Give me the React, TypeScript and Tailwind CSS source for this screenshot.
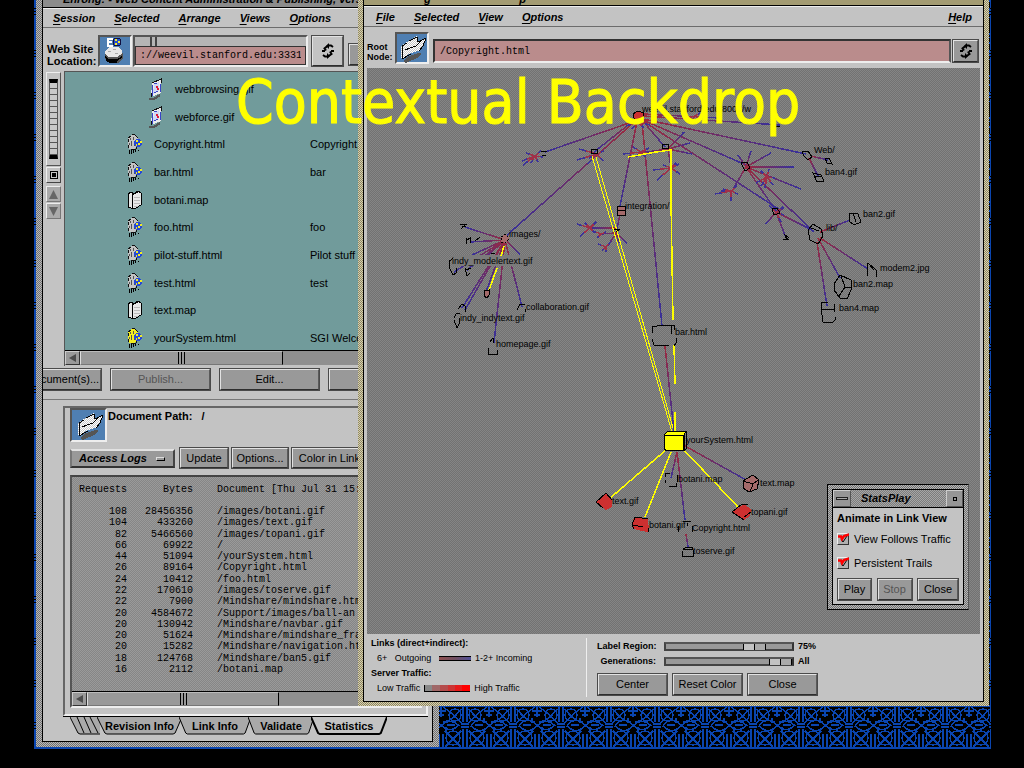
import React from "react";

const SANS = "font-['Liberation_Sans',Arial,sans-serif]";
const MONO = "font-['Liberation_Mono',monospace]";
const CHECK = "bg-[length:2px_2px]";
const GRAY_DITHER = `${CHECK} bg-[repeating-conic-gradient(#b9b9b9_0_25%,#717171_0_50%)]`;
const KHAKI_DITHER = `${CHECK} bg-[repeating-conic-gradient(#d6d0b4_0_25%,#8f875f_0_50%)]`;
const BTN =
  "flex shrink-0 items-center justify-center border-2 border-t-[#e2e2e2] border-l-[#e2e2e2] border-r-[#5a5a5a] border-b-[#2e2e2e] bg-[#999999] text-[11px] leading-none text-black whitespace-nowrap outline-1 -outline-offset-1 outline-[#4a4a4a]";

function MenuButton({ label }: { label: string }) {
  return (
    <button className="text-[11px] leading-[12px] font-bold italic">
      <span className="underline underline-offset-2">{label[0]}</span>
      {label.slice(1)}
    </button>
  );
}

function RecycleIcon() {
  return (
    <svg width="14" height="16" viewBox="0 0 14 16" fill="none" stroke="#000" strokeWidth="2" aria-hidden="true">
      <path d="M12 4 10 2.5H7L3.5 5.5 5 7.5" />
      <path d="M8 0v6l-3-3zM6 16v-6l3 3z" fill="#000" strokeWidth="0" />
      <path d="M2 12 4 13.5H7L10.500 11 9 8.500M10 8h3M1 8h3" />
    </svg>
  );
}

function PageIcon() {
  return (
    <svg width="30" height="29" viewBox="0 0 30 29" shapeRendering="crispEdges" aria-hidden="true">
      <defs>
        <pattern id="paper" width="2" height="2" patternUnits="userSpaceOnUse">
          <rect width="2" height="2" fill="#fff" />
          <rect width="1" height="1" fill="#c8c8c8" />
          <rect x="1" y="1" width="1" height="1" fill="#c8c8c8" />
        </pattern>
      </defs>
      <path d="M6 27 12 22 22 19 25 20 20 24 9 29z" fill="#555" />
      <path d="M4 12 10 8 13 6 20 2 21 8 29 4 27 11 23 16 12 20 5 25 4 24z" fill="url(#paper)" />
      <path d="M5 25V12M5 12 10 9M12 7 20 3M20 3 21 8M21 8 29 4M29 4 26 12 22 17M14 20 5 25M8 16 13 14 19 12 24 7" fill="none" stroke="#000" />
    </svg>
  );
}

function SiteIcon() {
  return (
    <svg width="30" height="28" viewBox="0 0 30 28" shapeRendering="crispEdges" aria-hidden="true">
      <path d="M7 2h6M8 2v7h5M8 5h4" stroke="#fff" strokeWidth="1.500" fill="none" />
      <circle cx="17" cy="5" r="4" fill="#214dd0" stroke="#101040" />
      <path d="M15 3h2M18 5h2M15 7h2" stroke="#f3ec28" strokeWidth="1.500" />
      <path d="M5 17v5l4 4h9l5-4v-6z" fill="#555" />
      <path d="M5 14 9 10h10l3 4v3l-5 3H9l-4-3z" fill="#e6e6e6" />
      <path d="M5 20l4 3h8l5-3M6 23l4 2h7" stroke="#000" strokeWidth="1.500" fill="none" />
      <path d="M8 14h3M13 12h3M15 16h3" stroke="#aaa" />
    </svg>
  );
}

type Kind = "gif" | "html" | "map" | "active";

function FileIcon({ kind }: { kind: Kind }) {
  if (kind === "gif")
    return (
      <svg width="16" height="22" viewBox="0 0 16 22" shapeRendering="crispEdges" aria-hidden="true">
        <path d="M1 21h5l6-4" stroke="#555" strokeWidth="2" fill="none" />
        <path d="M4 5 13 1v14L3 19z" fill="#ececec" />
        <path d="M4 5 13 1v4M3 19v-4" fill="none" stroke="#111" />
        <path d="M6 6 11 4v9l-6 3z" fill="#cfd8f5" />
        <path d="M4 7v11M12 6v8M6 6l3-1M6 15l4-2" stroke="#3a44c8" fill="none" />
        <path d="M8 9h2M9 11h2" stroke="#e01838" strokeWidth="2" />
      </svg>
    );
  if (kind === "map")
    return (
      <svg width="16" height="22" viewBox="0 0 16 22" shapeRendering="crispEdges" aria-hidden="true">
        <path d="M1 5 4 3l3 2 4-3 3 2v12l-7 4-6-2z" fill="#e8e8e8" stroke="#000" />
        <path d="M5 6v13M5 6l6-3" stroke="#000" />
        <path d="M7 8h6M7 11h6M7 14h6M7 17h4" stroke="#bbb" />
      </svg>
    );
  const body = kind === "active" ? "#f4ee20" : "#c4c4c4";
  return (
    <svg width="16" height="22" viewBox="0 0 16 22" shapeRendering="crispEdges" aria-hidden="true">
      <path d="M1 5 5 2h4l2 3v9l-4 2H2L1 12z" fill={body} />
      <path d="M1 5 4 3M5 1h3M8 2l3 3M1 6v3M1 12v3M4 16h5M9 14v2" stroke="#111" fill="none" />
      <path d="M3 5v2M4 8v5M6 4v3M7 9v4M9 6v2M2 10v2" stroke="#555" />
      <circle cx="11" cy="10" r="4" fill="#2548d8" />
      <path d="M9 8h2M11 11h2M9 12h1M13 9h2" stroke="#f4ee20" strokeWidth="1.500" />
      <path d="M2 17v4M4 17v4M6 17v3M8 17v2M11 17v1" stroke="#000" />
    </svg>
  );
}

const files: { name: string; title?: string; kind: Kind; deep?: boolean }[] = [
  { name: "webbrowsing.gif", kind: "gif", deep: true },
  { name: "webforce.gif", kind: "gif", deep: true },
  { name: "Copyright.html", title: "Copyright,", kind: "html" },
  { name: "bar.html", title: "bar", kind: "html" },
  { name: "botani.map", kind: "map" },
  { name: "foo.html", title: "foo", kind: "html" },
  { name: "pilot-stuff.html", title: "Pilot stuff f", kind: "html" },
  { name: "test.html", title: "test", kind: "html" },
  { name: "text.map", kind: "map" },
  { name: "yourSystem.html", title: "SGI Welco", kind: "active" },
];

const logs: [string, string, string][] = [
  ["108", "28456356", "/images/botani.gif"],
  ["104", "433260", "/images/text.gif"],
  ["82", "5466560", "/images/topani.gif"],
  ["66", "69922", "/"],
  ["44", "51094", "/yourSystem.html"],
  ["26", "89164", "/Copyright.html"],
  ["24", "10412", "/foo.html"],
  ["22", "170610", "/images/toserve.gif"],
  ["22", "7900", "/Mindshare/mindshare.htm"],
  ["20", "4584672", "/Support/images/ball-an"],
  ["20", "130942", "/Mindshare/navbar.gif"],
  ["20", "51624", "/Mindshare/mindshare_fra"],
  ["20", "15282", "/Mindshare/navigation.ht"],
  ["18", "124768", "/Mindshare/ban5.gif"],
  ["16", "2112", "/botani.map"],
];

function HScroll({ thumb }: { thumb: string }) {
  return (
    <div className="flex h-[15px] border-t border-black bg-[#8f8f8f]">
      <button aria-label="Scroll left" className="flex w-[15px] items-center justify-center border border-t-[#ccc] border-l-[#ccc] border-r-[#333] border-b-[#333] bg-[#999]">
        <svg width="8" height="8" viewBox="0 0 8 8" aria-hidden="true">
          <path d="M0 4 7 0v8z" fill="#4c4c4c" />
        </svg>
      </button>
      <div className={`flex items-stretch justify-center gap-[2px] border border-t-[#bbb] border-l-[#ddd] border-r-black border-b-[#777] bg-[#999] ${thumb}`}>
        <span className="w-px bg-black" />
        <span className="w-px bg-black" />
        <span className="w-px bg-black" />
      </div>
    </div>
  );
}

function Tab({ label, active, width }: { label: string; active?: boolean; width: string }) {
  return (
    <button role="tab" aria-selected={!!active} className={`relative -ml-[3px] flex h-[18px] items-center justify-center text-[11px] leading-none font-bold ${width}`}>
      <svg className="absolute inset-0 h-full w-full" viewBox="0 0 86 18" preserveAspectRatio="none" aria-hidden="true">
        <path d="M0 0 8 16 10 17H77L79 16 86 0z" fill={active ? "#c3c3c3" : "#a9a9a9"} />
        <path d="M0 0 8 16 10 17H77L79 16 86 0" fill="none" stroke="#000" vectorEffect="non-scaling-stroke" strokeWidth={active ? 2 : 1} />
      </svg>
      <span className="relative">{label}</span>
    </button>
  );
}

function SiteWindow() {
  return (
    <section aria-label="Web site" className={`absolute top-0 left-[36px] w-[403px] px-[6px] pb-[5px] ${GRAY_DITHER}`}>
      <div className="overflow-hidden border-x border-b border-black bg-[#c3c3c3]">
        <div className="flex h-[8px] items-end overflow-hidden border-b border-black bg-[#8c8c8c] pb-[2px] pl-[20px]">
          <h2 className="text-[11px] leading-[11px] font-bold whitespace-nowrap italic">Enrong: - Web Content Administration &amp; Publishing, versi</h2>
        </div>
        <nav className="flex h-[20px] items-center gap-[19px] border-t border-b border-t-[#eee] border-b-[#6c6c6c] pl-[10px]">
          {["Session", "Selected", "Arrange", "Views", "Options"].map((m) => (
            <MenuButton key={m} label={m} />
          ))}
        </nav>
        <div className="flex h-[43px] items-start pt-[7px] pl-[4px]">
          <label htmlFor="location" className="w-[51px] pt-[8px] text-[11px] leading-[12px] font-bold whitespace-nowrap">
            Web Site
            <br />
            Location:
          </label>
          <div className="flex h-[32px] w-[34px] items-center justify-center border-2 border-t-[#555] border-l-[#555] border-r-[#eee] border-b-[#eee] bg-[#4f7fb2]">
            <SiteIcon />
          </div>
          <div className="ml-px flex h-[32px] w-[175px] flex-col border-2 border-t-[#555] border-l-[#555] border-r-[#eee] border-b-[#eee]">
            <div className="flex h-[9px] gap-[3px] bg-[#b5b5b5] pl-[15px]">
              <span className="w-[2px] bg-[#444]" />
              <span className="w-[2px] bg-[#444]" />
            </div>
            <input
              id="location"
              defaultValue="://weevil.stanford.edu:3331"
              className={`h-[19px] w-full border border-[#333] bg-[#ba8c8c] px-[4px] text-[10px] leading-none outline-none ${MONO}`}
            />
          </div>
          <button aria-label="Reload" className={`${BTN} ml-[3px] h-[32px] w-[33px] bg-[#c3c3c3]!`}>
            <RecycleIcon />
          </button>
          <button className={`${BTN} mt-[8px] ml-[4px] h-[23px] w-[60px]`}>Load</button>
        </div>
        <div className="flex h-[295px]">
          <div className="flex w-[21px] shrink-0 flex-col items-center gap-px pt-px">
            <div className="h-[94px] w-[15px] border border-t-[#eee] border-l-[#eee] border-r-[#555] border-b-[#555] px-[2px] py-[6px]">
              <div className="h-full border-x border-y-4 border-x-[#555] border-y-black bg-[repeating-linear-gradient(#c9c9c9_0_5px,#555_5px_6px)]" />
            </div>
            <button aria-label="Home" className="flex h-[16px] w-[15px] items-center justify-center border border-t-[#eee] border-l-[#eee] border-r-[#444] border-b-[#444]">
              <span className="flex size-[8px] items-center justify-center border border-black">
                <span className="size-[4px] bg-black" />
              </span>
            </button>
            <button aria-label="Scroll up" className="mt-[2px] flex h-[16px] w-[15px] items-center justify-center border border-t-[#eee] border-l-[#eee] border-r-[#777] border-b-[#777] bg-[#aaa]">
              <svg width="9" height="9" viewBox="0 0 9 9" aria-hidden="true"><path d="M4.500 0 9 9H0z" fill="#666" /></svg>
            </button>
            <button aria-label="Scroll down" className="flex h-[16px] w-[15px] items-center justify-center border border-t-[#eee] border-l-[#eee] border-r-[#777] border-b-[#777] bg-[#aaa]">
              <svg width="9" height="9" viewBox="0 0 9 9" aria-hidden="true"><path d="M4.500 9 9 0H0z" fill="#666" /></svg>
            </button>
          </div>
          <div className="min-w-0 flex-1 border-t border-l border-[#555]">
            <div className="h-[278px] overflow-hidden bg-[#719b9b] pt-[3px]">
              <ul className="grid h-[277px] auto-rows-fr text-[11px] leading-[12px]">
                {files.map((f) => (
                  <li key={f.name} className="grid grid-cols-[245px_1fr] items-center">
                    <span className={`flex items-center gap-[11px] ${f.deep ? "pl-[83px]" : "pl-[62px]"}`}>
                      <FileIcon kind={f.kind} />
                      {f.name}
                    </span>
                    <span className="whitespace-nowrap">{f.title}</span>
                  </li>
                ))}
              </ul>
            </div>
            <HScroll thumb="w-[203px]" />
          </div>
        </div>
        <div className="-ml-[43px] flex h-[28px] gap-[8px] pt-[2px]">
          <button className={`${BTN} h-[23px] w-[102px] pl-[24px]`}>Document(s)...</button>
          <button className={`${BTN} h-[23px] w-[101px] text-[#555]!`} disabled>Publish...</button>
          <button className={`${BTN} h-[23px] w-[101px]`}>Edit...</button>
          <button className={`${BTN} h-[23px] w-[101px]`}>View...</button>
        </div>
        <div className="mt-[5px] border-t border-[#777] pt-[6px] pl-[20px]">
          <div className="mr-[4px] border-2 border-t-[#666] border-l-[#666] border-r-[#eee] border-b-[#eee] pr-[4px] pb-[6px] pl-[5px]">
            <div className="flex h-[39px]">
              <div className="flex h-[34px] w-[37px] items-center justify-center border-2 border-t-[#555] border-l-[#555] border-r-[#eee] border-b-[#eee] bg-[#4f7fb2]">
                <PageIcon />
              </div>
              <p className="pt-[2px] pl-px text-[11px] leading-[12px] font-bold">Document Path: &nbsp; /</p>
            </div>
            <div className="flex h-[28px] gap-[2px]">
              <div className="relative mt-[2px] mr-[2px] h-[19px] w-[105px]">
                <select
                  aria-label="Report"
                  className="block h-full w-full appearance-none border-2 border-t-[#e2e2e2] border-l-[#777] border-r-[#444] border-b-[#333] bg-[#999] pl-[7px] text-[11px] leading-none font-bold italic"
                >
                  <option>Access Logs</option>
                </select>
                <span className="pointer-events-none absolute top-[8px] right-[10px] h-[4px] w-[9px] border border-t-[#ddd] border-b-black border-l-[#ddd] border-r-black" />
              </div>
              <button className={`${BTN} h-[22px] w-[50px]`}>Update</button>
              <button className={`${BTN} h-[22px] w-[58px]`}>Options...</button>
              <button className={`${BTN} h-[22px] w-[86px]`}>Color in Link...</button>
            </div>
            <div className="border-2 border-t-[#444] border-l-[#555] border-r-[#eee] border-b-[#eee]">
              <div className="h-[214px] overflow-hidden bg-[repeating-conic-gradient(#9a9a9a_0_25%,#868686_0_50%)] bg-[length:2px_2px] pt-[7px]">
                <table className={`h-[191px] w-full table-fixed border-collapse text-[10px] leading-[11px] ${MONO}`}>
                  <thead>
                    <tr className="h-[22px] align-top">
                      <th className="w-[55px] p-0 text-right font-normal">Requests</th>
                      <th className="w-[66px] p-0 text-right font-normal">Bytes</th>
                      <th className="p-0 pl-[24px] text-left font-normal whitespace-nowrap">Document [Thu Jul 31 15:</th>
                    </tr>
                  </thead>
                  <tbody>
                    {logs.map(([r, b, d]) => (
                      <tr key={d}>
                        <td className="p-0 text-right">{r}</td>
                        <td className="p-0 text-right">{b}</td>
                        <td className="p-0 pl-[24px] whitespace-nowrap">{d}</td>
                      </tr>
                    ))}
                  </tbody>
                </table>
              </div>
              <HScroll thumb="w-[192px]" />
            </div>
          </div>
          <div role="tablist" className="mr-[4px] flex border-t border-black pb-[6px] pl-[7px]">
            <svg width="30" height="18" viewBox="0 0 30 18" fill="none" stroke="#000" aria-hidden="true">
              <path d="M1 0h26l8 16v1H11L8 16z" fill="#a9a9a9" stroke="none" />
              <path d="M0 0 8 16 10 17H30M7 0 14 16M14 0 21 16M20 0 28 16" />
            </svg>
            <Tab label="Revision Info" width="w-[85px]" />
            <Tab label="Link Info" width="w-[72px]" />
            <Tab label="Validate" width="w-[66px]" />
            <Tab label="Statistics" active width="w-[76px]" />
          </div>
        </div>
      </div>
    </section>
  );
}

type Pt4 = [number, number, number, number];

const links: Pt4[] = [
  [632, 122, 545, 152],
  [632, 122, 594, 152],
  [632, 124, 506, 236],
  [637, 122, 620, 206],
  [642, 122, 662, 326],
  [642, 120, 665, 147],
  [643, 120, 746, 165],
  [643, 119, 806, 154],
  [643, 121, 780, 210],
  [643, 116, 780, 125],
  [643, 114, 720, 118],
  [668, 149, 684, 132],
  [668, 149, 690, 143],
  [668, 149, 692, 154],
  [668, 149, 640, 153],
  [668, 149, 671, 168],
  [746, 167, 738, 155],
  [746, 167, 751, 151],
  [746, 167, 771, 153],
  [746, 167, 794, 167],
  [746, 167, 801, 189],
  [746, 167, 732, 191],
  [746, 167, 776, 211],
  [746, 167, 814, 232],
  [776, 212, 786, 238],
  [776, 212, 784, 208],
  [776, 212, 766, 224],
  [776, 212, 810, 229],
  [811, 156, 828, 160],
  [809, 158, 818, 176],
  [820, 232, 850, 220],
  [820, 238, 868, 269],
  [818, 238, 840, 278],
  [817, 242, 827, 306],
  [505, 240, 465, 227],
  [505, 240, 470, 242],
  [505, 240, 472, 255],
  [505, 240, 480, 262],
  [505, 240, 454, 272],
  [505, 240, 467, 270],
  [505, 240, 462, 308],
  [505, 240, 465, 310],
  [505, 240, 486, 292],
  [505, 240, 494, 343],
  [505, 240, 522, 307],
  [505, 240, 520, 254],
  [620, 214, 617, 229],
  [616, 228, 590, 228],
  [616, 233, 600, 234],
  [616, 233, 608, 246],
  [616, 233, 627, 243],
  [616, 233, 619, 243],
  [665, 346, 674, 432],
  [677, 452, 671, 478],
  [677, 452, 685, 520],
  [686, 534, 688, 547],
  [685, 446, 748, 481],
];

const bursts: { x: number; y: number; rays: [number, number][] }[] = [
  { x: 535, y: 156, rays: [[-12, 9], [-9, -3], [-4, 7], [6, -5], [3, 6], [-13, 5], [8, 1]] },
  { x: 597, y: 154, rays: [[-18, -5], [-20, 6], [-9, 10], [6, 7], [-8, 4], [7, -3]] },
  { x: 641, y: 152, rays: [[-18, 2], [-8, -5], [8, -4], [-5, 5], [10, 2], [5, 5]] },
  { x: 671, y: 168, rays: [[-18, 2], [-14, 12], [8, -4], [9, 6], [-8, -3], [5, -5]] },
  { x: 731, y: 191, rays: [[-16, 3], [-8, -2], [0, 10], [7, 3], [6, -5], [-10, 0]] },
  { x: 767, y: 177, rays: [[-11, 6], [-6, -6], [-2, 11], [6, 8], [8, 1], [2, -8], [-6, 9]] },
  { x: 590, y: 228, rays: [[-13, -4], [-10, 8], [6, -6], [5, 5], [-5, -5]] },
  { x: 601, y: 234, rays: [[-8, -3], [-4, 4], [5, -2]] },
  { x: 606, y: 247, rays: [[-8, -3], [0, 5], [4, -5], [-4, 3]] },
  { x: 776, y: 212, rays: [[7, -5], [5, 10], [-7, -6], [8, 3]] },
  { x: 695, y: 116, rays: [[-9, 2], [8, 2], [-4, 7], [10, 6], [5, -3]] },
  { x: 638, y: 122, rays: [[-12, 4], [-6, 7], [6, 6], [12, 3]] },
];

const labels: [string, number, number][] = [
  ["weevil.stanford.edu:8001/w", 642, 112],
  ["Web/", 814, 153],
  ["ban4.gif", 825, 175],
  ["ban2.gif", 863, 217],
  ["lib/", 826, 231],
  ["modem2.jpg", 880, 271],
  ["ban2.map", 853, 287],
  ["ban4.map", 839, 311],
  ["integration/", 625, 209],
  ["images/", 509, 237],
  ["collaboration.gif", 526, 310],
  ["indy_indytext.gif", 460, 321],
  ["homepage.gif", 496, 347],
  ["bar.html", 675, 335],
  ["yourSystem.html", 686, 443],
  ["botani.map", 678, 482],
  ["text.map", 760, 486],
  ["text.gif", 612, 504],
  ["botani.gif", 649, 528],
  ["topani.gif", 751, 515],
  ["Copyright.html", 692, 531],
  ["toserve.gif", 693, 554],
];

function LinkGraph() {
  return (
    <svg width="613" height="566" viewBox="367 68 613 566" role="img" aria-label="Link view" className="block">
      <defs>
        {links.map(([a, b, c, d], i) => (
          <linearGradient key={i} id={`lk${i}`} gradientUnits="userSpaceOnUse" x1={a} y1={b} x2={c} y2={d}>
            <stop offset="0" stopColor="#9c2a3e" />
            <stop offset="1" stopColor="#35309c" />
          </linearGradient>
        ))}
      </defs>
      <g shapeRendering="crispEdges" strokeWidth="1.500" fill="none">
        {links.map(([a, b, c, d], i) => (
          <path key={i} d={`M${a} ${b}L${c} ${d}`} stroke={`url(#lk${i})`} />
        ))}
        {bursts.map(({ x, y, rays }) =>
          rays.map(([dx, dy], k) => (
            <g key={`${x}-${y}-${k}`}>
              <path d={`M${x} ${y}l${dx} ${dy}`} stroke="#3b329a" />
              <path d={`M${x} ${y}l${dx * 0.6} ${dy * 0.6}`} stroke="#a03048" />
            </g>
          )),
        )}
        <rect x="452" y="255" width="86" height="11" fill="#7b7b7b" />
        <g stroke="#ffff00" strokeWidth="1.500">
          <path d="M592 156 672 432M596 157 673 428" strokeWidth="1" />
          <path d="M628 157 656 152 671 150V200L673 320M674 345 675 384M675 412V434" />
          <path d="M504 246 501 256M497 268 488 293M666 450 609 499M671 452 645 517M685 451 738 507" />
        </g>
      </g>
      <g shapeRendering="crispEdges" stroke="#000" fill="none">
        <path d="M633 114 638 111 644 113 642 121 635 122z" fill="#cc3030" />
        <path d="M665 434 668 431 686 431 684 435 683 450 667 451 664 449z" fill="#ffff00" />
        <path d="M665 435h19v15M684 435l2-4v18l-3 2" />
        <path d="M596 502 606 493 612 500 612 507 606 510z" fill="#cc3030" stroke="none" />
        <path d="M596 502 606 493 612 500M596 502l7 6" />
        <path d="M634 517 648 519 649 530 647 532 634 529 632 525z" fill="#cc3030" stroke="none" />
        <path d="M633 525l10 2M634 529l-2-4 3-8 13 2M648 528v4" />
        <path d="M732 512 744 504 751 509 750 516 744 520z" fill="#cc3030" stroke="none" />
        <path d="M732 512 742 504 748 504M732 512 744 520M744 517l7-5" />
        <path d="M743 481 753 475 759 480 757 489 749 492 743 488z" fill="#a46a6a" />
        <path d="M743 481l10 3 5-4M753 484l-3 8" />
        <path d="M617 206h8v9h-8zM617 210h8" fill="#a46a6a" />
        <path d="M501 237 506 234 509 238 506 243 501 242z" fill="#a46a6a" strokeDasharray="2 2" />
        <path d="M484 291 489 290 489 295 487 298 484 296z" fill="#a46a6a" />
        <path d="M652 333v-6l10-2h3M665 325h9v5M671 326v8M676 338v5l-2 3M669 345H654l-2-6" />
        <path d="M808 230 813 224 821 229 823 236 818 244 810 240zM811 228l8 3" />
        <path d="M802 152 808 151 812 157 808 160 804 156zM825 158 829 158 832 164 827 163zM813 173 821 175 824 181 817 182zM815 176h7" />
        <path d="M849 213 858 214 861 222 854 225 849 221zM853 213l3 9" />
        <path d="M867 276v-9l1-4 8 7v7M869 264l5 6" />
        <path d="M834 284 840 275 851 280 852 288 847 299 840 298 834 290zM841 276l4 11 7 1M845 287l-6 9" />
        <path d="M828 302h-7v6l2 14h10l2-2v-3M821 309h13M834 304v8" />
        <path d="M741 163 747 162 750 168 745 171zM591 149h6v4h-6zM662 144h6v4h-6zM541 151h6M542 155h4M772 209 777 208 780 213 774 215zM784 234l5 4M783 239h6M785 236l3 4" />
        <path d="M460 224h7M461 229l4-4M462 226h4M466 238v6M466 241l4-3v5M475 241l5-4" />
        <path d="M449 260v9M450 269l3 6 3-2v-5M465 268l2 8 3-3M450 261l3-3M491 253h4M466 270l5-2" />
        <path d="M458 309 462 304 465 306V312M454 318l2-4 4-1M454 320l3 8 2-4v-6M517 310l3-6 5 1M525 309v3M490 342l3-4 1 5M488 348v6h9v-4" />
        <path d="M614 229h6M616 232l4-3" />
        <path d="M665 477v-4h5M677 475v7M665 480v3M669 486h7v-3M683 521h8M687 526v-3M678 526v6M692 526v6M682 551v5h11v-6M683 549l4-2h5v2H683" />
        <path d="M776 126h4" />
      </g>
      <g className="fill-black font-['Liberation_Sans',Arial,sans-serif] text-[9px]">
        <text x="452" y="264">indy_modelertext.gif</text>
        {labels.map(([t, x, y]) => (
          <text key={t} x={x} y={y}>{t}</text>
        ))}
      </g>
    </svg>
  );
}

const RANGE =
  "block h-[9px] w-[130px] appearance-none border-2 border-t-[#555] border-l-[#444] border-r-[#333] border-b-[#444] bg-[#999] [&::-webkit-slider-thumb]:h-[6px] [&::-webkit-slider-thumb]:w-[23px] [&::-webkit-slider-thumb]:appearance-none [&::-webkit-slider-thumb]:border-x [&::-webkit-slider-thumb]:border-black [&::-webkit-slider-thumb]:bg-[linear-gradient(90deg,#c3c3c3_0_10px,#000_10px_11px,#aaa_11px)]";

function LinkWindow() {
  return (
    <section aria-label="Link view" className={`absolute top-0 right-[35px] left-[358px] px-[5px] pb-[4px] ${KHAKI_DITHER}`}>
      <div className="border-x border-b border-black bg-[#c3c3c3]">
        <div className="flex h-[6px] items-end overflow-hidden border-b border-black bg-[#a39b72] pl-[60px]">
          <h2 className="text-[11px] leading-[12px] font-bold whitespace-nowrap italic">g &nbsp; &nbsp; &nbsp; &nbsp; &nbsp; &nbsp; &nbsp; &nbsp; &nbsp; &nbsp; &nbsp; &nbsp; &nbsp; &nbsp; p</h2>
        </div>
        <nav className="flex h-[21px] items-center gap-[19px] border-t border-b border-t-[#eee] border-b-[#6c6c6c] pr-[11px] pl-[12px]">
          {["File", "Selected", "View", "Options"].map((m) => (
            <MenuButton key={m} label={m} />
          ))}
          <span className="flex-1" />
          <MenuButton label="Help" />
        </nav>
        <div className="flex h-[41px] items-start pt-[5px] pr-[4px] pl-[3px]">
          <label htmlFor="root" className="w-[28px] pt-[10px] text-[9px] leading-[10px] font-bold">
            Root Node:
          </label>
          <div className="flex h-[32px] w-[34px] items-center justify-center border-2 border-t-[#555] border-l-[#555] border-r-[#eee] border-b-[#eee] bg-[#4f7fb2]">
            <PageIcon />
          </div>
          <input
            id="root"
            defaultValue="/Copyright.html"
            className={`mt-[7px] ml-[4px] h-[24px] min-w-0 flex-1 border-2 border-t-[#333] border-l-[#333] border-r-[#555] border-b-[#eee] bg-[#ba8c8c] px-[5px] text-[10px] leading-none outline-none ${MONO}`}
          />
          <button aria-label="Reload" className={`${BTN} mt-[7px] ml-px h-[24px] w-[27px]`}>
            <RecycleIcon />
          </button>
        </div>
        <div className="mx-[3px] overflow-hidden bg-[repeating-conic-gradient(#858585_0_25%,#727272_0_50%)] bg-[length:2px_2px]">
          <LinkGraph />
        </div>
        <div className="flex h-[67px] pl-[7px]">
          <div className="my-[4px] w-[216px] shrink-0 border-r border-[#eee] text-[9px] leading-[15px]">
            <h3 className="-mt-[2px] font-bold">Links (direct+indirect):</h3>
            <p className="flex items-center gap-[4px] pl-[6px]">
              <span className="w-[58px] whitespace-pre">6+   Outgoing</span>
              <span className="h-[5px] w-[32px] border-y border-black bg-[linear-gradient(90deg,#8f4f4f,#6f4f60,#50509a)]" />
              1-2+ Incoming
            </p>
            <h3 className="font-bold">Server Traffic:</h3>
            <p className="flex items-center gap-[4px] pl-[6px]">
              Low Traffic
              <span className="h-[7px] w-[46px] border-b border-l border-black bg-[linear-gradient(90deg,#888_0_16%,#a06868_16%_33%,#b54c4c_33%_50%,#cc3434_50%_66%,#e61a1a_66%_83%,#f00_83%)]" />
              High Traffic
            </p>
          </div>
          <div className="pt-[5px] pl-[10px] text-[9px] leading-[15px] font-bold">
            <div className="flex items-center">
              <label htmlFor="region" className="w-[59px] text-right whitespace-nowrap">Label Region:</label>
              <input id="region" type="range" defaultValue="75" className={`mr-[4px] ml-[8px] ${RANGE}`} />
              75%
            </div>
            <div className="flex items-center">
              <label htmlFor="gens" className="w-[59px] text-right whitespace-nowrap">Generations:</label>
              <input id="gens" type="range" defaultValue="100" className={`mr-[4px] ml-[8px] ${RANGE}`} />
              All
            </div>
            <div className="mt-[4px] flex gap-[4px] font-normal">
              <button className={`${BTN} h-[23px] w-[71px]`}>Center</button>
              <button className={`${BTN} h-[23px] w-[71px]`}>Reset Color</button>
              <button className={`${BTN} h-[23px] w-[71px]`}>Close</button>
            </div>
          </div>
        </div>
      </div>
    </section>
  );
}

function CheckRow({ label }: { label: string }) {
  return (
    <label className="flex h-[24px] items-center gap-[5px] text-[11px] leading-none whitespace-nowrap">
      <span className="relative block size-[12px]">
        <input type="checkbox" defaultChecked className="peer block size-[12px] appearance-none border border-t-[#eee] border-l-[#eee] border-r-[#333] border-b-[#333] bg-[#b0b0b0]" />
        <svg className="pointer-events-none absolute top-0 left-0 hidden peer-checked:block" width="12" height="12" viewBox="0 0 12 12" fill="none" aria-hidden="true">
          <path d="M4 6 6 9 10 3" stroke="#000" />
          <path d="M1 3.500H4L5 6 7 3 12 1.500" stroke="#ff0000" strokeWidth="2.500" />
        </svg>
      </span>
      {label}
    </label>
  );
}

function StatsPlay() {
  return (
    <section aria-label="StatsPlay" className={`absolute top-[484px] right-[55px] w-[142px] border border-t-black border-l-black border-r-[#555] border-b-black p-[4px] ${GRAY_DITHER}`}>
      <div className="border border-black bg-[#c3c3c3]">
        <div className="flex h-[18px] border-b border-black bg-[#969696]">
          <button aria-label="Window menu" className="flex w-[18px] items-center justify-center border border-t-[#ccc] border-l-[#ccc] border-r-[#555] border-b-[#555]">
            <span className="h-[3px] w-[12px] border border-[#222] bg-[#aaa]" />
          </button>
          <h2 className={`flex-1 pl-[10px] text-[11px] leading-[16px] font-bold italic ${CHECK} bg-[repeating-conic-gradient(#a6a6a6_0_25%,#7c7c7c_0_50%)]`}>StatsPlay</h2>
          <button aria-label="Minimize" className="flex w-[17px] items-center justify-center border border-t-[#ccc] border-l-[#ccc] border-r-[#555] border-b-[#555]">
            <span className="size-[4px] border border-black" />
          </button>
        </div>
        <div className="px-[4px] pt-[4px] pb-[3px]">
          <h3 className="mb-[3px] text-[11px] leading-[12px] font-bold whitespace-nowrap">Animate in Link View</h3>
          <CheckRow label="View Follows Traffic" />
          <CheckRow label="Persistent Trails" />
          <div className="mt-[3px] flex justify-between">
            <button className={`${BTN} h-[23px] w-[35px]`}>Play</button>
            <button className={`${BTN} h-[23px] w-[36px] text-[#555]!`} disabled>Stop</button>
            <button className={`${BTN} h-[23px] w-[42px]`}>Close</button>
          </div>
        </div>
      </div>
    </section>
  );
}

function Wallpaper() {
  return (
    <div className="absolute top-0 right-[33px] left-[34px] h-[749px]">
      <svg className="h-full w-full" aria-hidden="true">
        <defs>
          <pattern id="knot" x="431" y="707" width="48" height="42" patternUnits="userSpaceOnUse">
            <g stroke="#0a45b0" strokeWidth="1.500" fill="none" shapeRendering="crispEdges">
              <path d="M2 0v15M46 0v15M2 22v20M46 22v20M0 17h4M0 20h4M44 17h4M44 20h4M0 41h48" />
              <path d="M4 2C10 10 14 14 22 15M44 2C38 10 34 14 26 15M4 16C10 8 16 4 22 0M44 16C38 8 32 4 26 0" />
              <circle cx="10" cy="8" r="6" />
              <circle cx="38" cy="8" r="6" />
              <path d="M6 18C12 12 18 12 24 18 30 24 36 24 42 18M6 19C12 25 18 25 24 19 30 13 36 13 42 19M10 18h8M30 18h8M19 11v5M29 20v6" />
              <path d="M4 24 20 40M20 24 4 40M28 24 44 40M44 24 28 40M22 27v15M26 27v15" />
              <circle cx="12" cy="31" r="7" />
              <circle cx="36" cy="31" r="7" />
              <path d="M19 4h10M21 8h6M24 0v10" />
            </g>
          </pattern>
        </defs>
        <rect width="100%" height="100%" fill="url(#knot)" />
      </svg>
    </div>
  );
}

export default function App() {
  return (
    <main className={`relative h-screen min-h-[768px] overflow-hidden bg-black text-black ${SANS}`}>
      <Wallpaper />
      <SiteWindow />
      <LinkWindow />
      <StatsPlay />
      <h1 className="pointer-events-none absolute top-[71px] left-[236px] font-['DejaVu_Sans_Condensed','DejaVu_Sans',sans-serif] text-[60px] leading-[62px] whitespace-nowrap text-[#ffff00] [-webkit-text-stroke:1px_#ffff00]">
        Contextual Backdrop
      </h1>
    </main>
  );
}
